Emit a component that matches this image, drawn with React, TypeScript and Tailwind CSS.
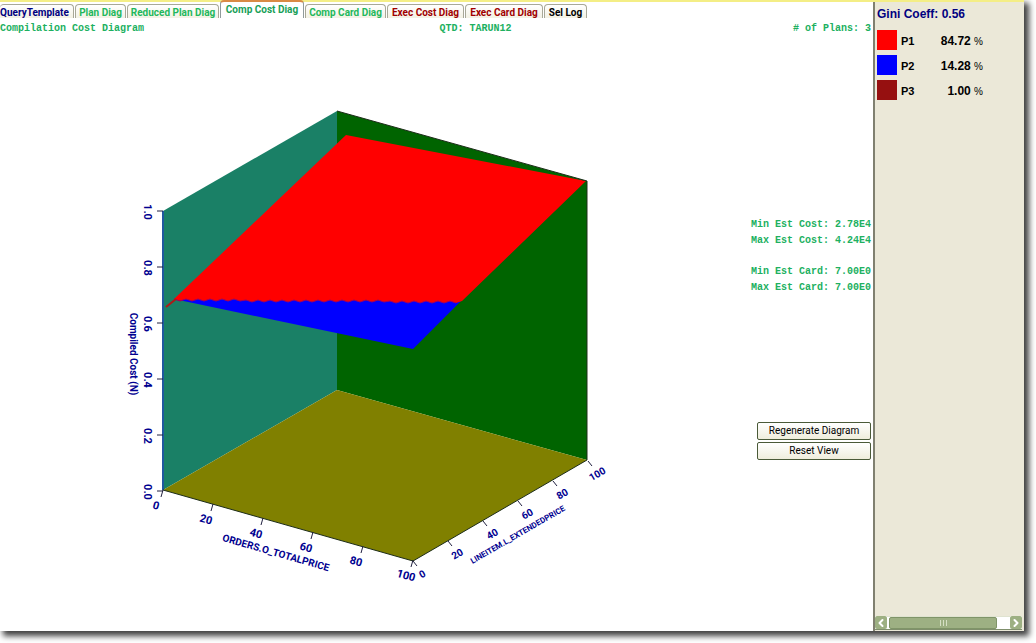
import { ChevronLeft, ChevronRight } from "lucide-react";

const tabs = [
  { label: "QueryTemplate", color: "text-[#000080]", width: "w-[74px]" },
  { label: "Plan Diag", color: "text-[#1fb85c]", width: "w-[51px]" },
  { label: "Reduced Plan Diag", color: "text-[#1fb85c]", width: "w-[92px]" },
  { label: "Comp Cost Diag", color: "text-[#18a058]", width: "w-[84px]" },
  { label: "Comp Card Diag", color: "text-[#1fb85c]", width: "w-[81px]" },
  { label: "Exec Cost Diag", color: "text-[#a00000]", width: "w-[77px]" },
  { label: "Exec Card Diag", color: "text-[#a00000]", width: "w-[78px]" },
  { label: "Sel Log", color: "text-black", width: "w-[43px]" },
];

const plans = [
  { name: "P1", share: "84.72", color: "bg-[#ff0000]" },
  { name: "P2", share: "14.28", color: "bg-[#0000ff]" },
  { name: "P3", share: "1.00", color: "bg-[#961010]" },
];

const activeTab = "Comp Cost Diag";

// Ragged border between the P1 and P2 regions of the surface
const seam = Array.from({ length: 48 }, (_, i) => {
  const x = 174 + i * 6;
  const y = 299 + Math.round((i * 2) / 47) + (i % 2) * 2;
  return `${x},${y}`;
}).join(" ");

const TabBar = () => (
  <div
    role="tablist"
    className="flex h-4 items-end gap-px font-['Roboto',sans-serif] text-[10px] font-bold"
  >
    {tabs.map((tab) =>
      tab.label === activeTab ? (
        <button
          key={tab.label}
          role="tab"
          aria-selected="true"
          className={`${tab.width} ${tab.color} h-[18px] shrink-0 rounded-t-sm border border-t-2 border-b-0 border-[#919b9c] border-t-[#d98a45] bg-white text-center leading-4 whitespace-nowrap`}
        >
          {tab.label}
        </button>
      ) : (
        <button
          key={tab.label}
          role="tab"
          aria-selected="false"
          className={`${tab.width} ${tab.color} h-[14px] shrink-0 rounded-t-sm border border-b-0 border-[#a8a898] bg-linear-to-b from-white to-[#f3f1e4] text-center leading-4 whitespace-nowrap first:border-l-0 first:text-left`}
        >
          {tab.label}
        </button>
      ),
    )}
  </div>
);

const CostCube = () => (
  <svg
    viewBox="110 90 520 500"
    className="mt-[53px] ml-[110px] h-[500px] w-[520px] shrink-0"
    role="img"
    aria-label="Compilation cost surface"
  >
    {/* walls and floor */}
    <polygon points="163,211 337,111 337,390 163,490" fill="#1a8066" />
    <polygon points="337,111 587,181 587,460 337,390" fill="#006400" />
    <polygon points="163,490 337,390 587,460 413,561" fill="#808000" />
    {/* surface */}
    <polygon points="174,299 461,301 413,349" fill="#0000ff" />
    <polygon points={`${seam} 462,301 586,181 346,135`} fill="#ff0000" />
    <polyline points={seam} fill="none" stroke="#a00060" strokeWidth="1" />
    <path d="M166 307L176 299" stroke="#b01818" strokeWidth="2" />
    {/* axes */}
    <path d="M163 211V490" stroke="#2058a0" strokeWidth="2" />
    <path
      d="M163 490L413 561L587 460M337 111L587 181V460"
      fill="none"
      stroke="#1c2c18"
      strokeWidth="1"
    />
    <g stroke="#202040" strokeWidth="1">
      {[0, 1, 2, 3, 4, 5].map((i) => (
        <g key={i}>
          <line x1="157" x2="163" y1={491 - i * 56} y2={491 - i * 56} />
          <line
            x1={163 + i * 50}
            y1={490 + i * 14}
            x2={161 + i * 50}
            y2={497 + i * 14}
          />
          <line
            x1={413 + i * 35}
            y1={561 - i * 20}
            x2={417 + i * 35}
            y2={566 - i * 20}
          />
        </g>
      ))}
    </g>
    <g
      fill="#000090"
      textAnchor="middle"
      className="font-['Roboto',sans-serif] text-[11px] font-bold"
    >
      {["0.0", "0.2", "0.4", "0.6", "0.8", "1.0"].map((label, i) => (
        <text
          key={label}
          transform={`translate(144 ${492 - i * 56}) rotate(90)`}
        >
          {label}
        </text>
      ))}
      <text transform="translate(130 354) rotate(90)" className="text-[10px]">
        Compiled Cost (N)
      </text>
      {["0", "20", "40", "60", "80", "100"].map((label, i) => (
        <g key={label}>
          <text
            transform={`translate(${155 + i * 50} ${509 + i * 14}) rotate(16)`}
          >
            {label}
          </text>
          <text
            transform={`translate(${424 + i * 35} ${577 - i * 20}) rotate(-30)`}
            className="text-[10px]"
          >
            {label}
          </text>
        </g>
      ))}
      <text transform="translate(275 556) rotate(16)" className="text-[10px]">
        ORDERS.O_TOTALPRICE
      </text>
      <text transform="translate(519 537) rotate(-30)" className="text-[8px]">
        LINEITEM.L_EXTENDEDPRICE
      </text>
    </g>
  </svg>
);

const Scrollbar = () => (
  <div className="mr-0.5 flex h-[14px] items-stretch border-b border-[#7f8f6c] bg-white">
    <button
      aria-label="Scroll left"
      className="flex w-3 items-center justify-center rounded-xs bg-[#9db083] text-white"
    >
      <ChevronLeft size={12} strokeWidth={4} />
    </button>
    <div className="flex flex-1 border-t border-[#dfe3d0]">
      <div className="ml-0.5 flex w-[108px] items-center justify-center gap-0.5 rounded-xs border border-[#7f9468] bg-[#9db083]">
        <span className="h-1.5 w-px bg-[#d5dfc4]" />
        <span className="h-1.5 w-px bg-[#d5dfc4]" />
        <span className="h-1.5 w-px bg-[#d5dfc4]" />
      </div>
    </div>
    <button
      aria-label="Scroll right"
      className="flex w-3 items-center justify-center rounded-xs bg-[#9db083] text-white"
    >
      <ChevronRight size={12} strokeWidth={4} />
    </button>
  </div>
);

const App = () => {
  const actionClass =
    "h-[18px] w-full rounded-xs border border-[#4a5a38] bg-linear-to-b from-white to-[#efeddc] text-center font-['Roboto',sans-serif] text-[10px] leading-4";

  return (
    <div className="flex min-h-screen overflow-hidden bg-white pr-3 pb-3 font-['Liberation_Sans',sans-serif] text-[11px] text-black">
      <div className="flex flex-1 flex-col bg-white shadow-[4px_4px_6px_1px_rgba(0,0,0,0.75)]">
        <div className="h-0.5 bg-[#f4ee86]" />
        <div className="flex flex-1">
          {/* Diagram pane */}
          <main className="flex min-w-0 flex-1 flex-col">
            <TabBar />
            <div className="mt-[3px] grid grid-cols-3 pr-0.5 font-['Liberation_Mono',monospace] text-[10px] leading-4 font-bold text-[#20b060]">
              <h1>Compilation Cost Diagram</h1>
              <p className="pl-20 text-center">QTD: TARUN12</p>
              <p className="text-right"># of Plans: 3</p>
            </div>
            <div className="flex flex-1 justify-between">
              <CostCube />
              <aside className="mr-0.5 flex w-[120px] flex-col pt-[180px]">
                <div className="font-['Liberation_Mono',monospace] text-[10px] leading-4 font-bold whitespace-nowrap text-[#20b060]">
                  <p>Min Est Cost: 2.78E4</p>
                  <p>Max Est Cost: 4.24E4</p>
                  <p className="mt-[15px]">Min Est Card: 7.00E0</p>
                  <p>Max Est Card: 7.00E0</p>
                </div>
                <div className="mt-[126px] ml-1.5 flex flex-col gap-0.5">
                  <button className={actionClass}>Regenerate Diagram</button>
                  <button className={actionClass}>Reset View</button>
                </div>
              </aside>
            </div>
          </main>

          {/* Plan legend */}
          <aside className="flex w-[151px] shrink-0 flex-col border-l-2 border-[#808070] bg-[#ebe8d8]">
            <h2 className="pt-1 pl-0.5 text-[12px] leading-4 font-bold text-[#000080]">
              Gini Coeff: 0.56
            </h2>
            <table className="mt-[3px] ml-0.5 w-[106px] border-separate border-spacing-x-0 border-spacing-y-[5px] leading-4 font-bold">
              <tbody>
                {plans.map((plan) => (
                  <tr key={plan.name} className="h-5">
                    <td className="w-5 p-0">
                      <div className={`h-5 w-5 ${plan.color}`} />
                    </td>
                    <td className="p-0 pt-0.5 pl-1">{plan.name}</td>
                    <td className="p-0 pt-0.5 text-right text-[12px]">
                      {plan.share}{" "}
                      <span className="text-[10px] font-normal">%</span>
                    </td>
                  </tr>
                ))}
              </tbody>
            </table>
            <div className="mt-auto pb-px">
              <Scrollbar />
            </div>
          </aside>
        </div>
      </div>
    </div>
  );
};

export default App;
